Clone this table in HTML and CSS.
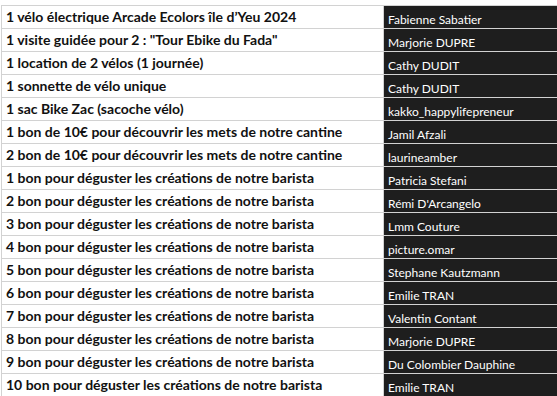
FILE: index.html
```html
<!DOCTYPE html>
<html lang="fr">
<head>
<meta charset="utf-8">
<link rel="stylesheet" href="styles.css">
</head>
<body>
<table class="sheet">
<tr><td class="lot">1 vélo électrique Arcade Ecolors île d’Yeu 2024</td><td class="winner">Fabienne Sabatier</td></tr>
<tr><td class="lot">1 visite guidée pour 2 : "Tour Ebike du Fada"</td><td class="winner">Marjorie DUPRE</td></tr>
<tr><td class="lot">1 location de 2 vélos (1 journée)</td><td class="winner">Cathy DUDIT</td></tr>
<tr><td class="lot">1 sonnette de vélo unique</td><td class="winner">Cathy DUDIT</td></tr>
<tr><td class="lot">1 sac Bike Zac (sacoche vélo)</td><td class="winner">kakko_happylifepreneur</td></tr>
<tr><td class="lot">1 bon de 10€ pour découvrir les mets de notre cantine</td><td class="winner">Jamil Afzali</td></tr>
<tr><td class="lot">2 bon de 10€ pour découvrir les mets de notre cantine</td><td class="winner">laurineamber</td></tr>
<tr><td class="lot">1 bon pour déguster les créations de notre barista</td><td class="winner">Patricia Stefani</td></tr>
<tr><td class="lot">2 bon pour déguster les créations de notre barista</td><td class="winner">Rémi D'Arcangelo</td></tr>
<tr><td class="lot">3 bon pour déguster les créations de notre barista</td><td class="winner">Lmm Couture</td></tr>
<tr><td class="lot">4 bon pour déguster les créations de notre barista</td><td class="winner">picture.omar</td></tr>
<tr><td class="lot">5 bon pour déguster les créations de notre barista</td><td class="winner">Stephane Kautzmann</td></tr>
<tr><td class="lot">6 bon pour déguster les créations de notre barista</td><td class="winner">Emilie TRAN</td></tr>
<tr><td class="lot">7 bon pour déguster les créations de notre barista</td><td class="winner">Valentin Contant</td></tr>
<tr><td class="lot">8 bon pour déguster les créations de notre barista</td><td class="winner">Marjorie DUPRE</td></tr>
<tr><td class="lot">9 bon pour déguster les créations de notre barista</td><td class="winner">Du Colombier Dauphine</td></tr>
<tr><td class="lot">10 bon pour déguster les créations de notre barista</td><td class="winner">Emilie TRAN</td></tr>
</table>
</body>
</html>
```
FILE: styles.css
```css
html, body {
  margin: 0;
  padding: 0;
  background: #ffffff;
  overflow: hidden;
}
.sheet {
  margin: 5px 0 0 1px;
  border-collapse: collapse;
  width: 600px;
  table-layout: fixed;
}
.sheet td {
  box-sizing: border-box;
  height: 23px;
  padding: 0;
  border: 1px solid #d2d2d2;
  white-space: nowrap;
  overflow: hidden;
}
.lot {
  width: 382px;
  padding-left: 4px !important;
  font-family: Lato, "Liberation Sans", sans-serif;
  font-weight: 700;
  font-size: 14px;
  line-height: 20px;
  color: #111111;
  vertical-align: middle;
}
.winner {
  background: #1e1e1e;
  color: #ffffff;
  padding-left: 4px !important;
  padding-top: 4px !important;
  font-family: Lato, "Liberation Sans", sans-serif;
  font-size: 12px;
  line-height: 17px;
  vertical-align: middle;
}
```
